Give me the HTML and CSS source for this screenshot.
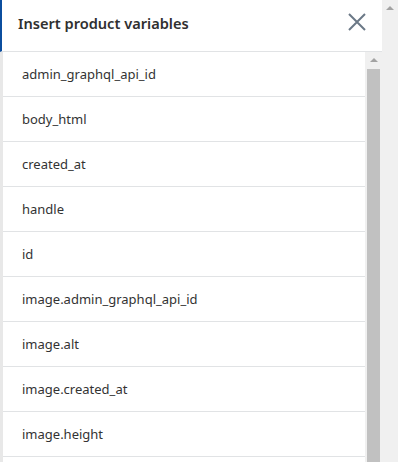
FILE: index.html
```html
<!DOCTYPE html>
<html lang="en">
<head>
    <meta charset="UTF-8">
    <meta name="viewport" content="width=device-width, initial-scale=1.0">
    <title>Insert product variables</title>
    <link rel="stylesheet" href="styles.css">
</head>
<body>
    <div class="page">
        <div class="panel">
            <div class="panel-header">
                <h2>Insert product variables</h2>
                <button class="close" aria-label="Close">
                    <svg width="20" height="20" viewBox="0 0 20 20">
                        <path d="M2 2 L18 18 M18 2 L2 18" stroke="#6b7886" stroke-width="2" fill="none"/>
                    </svg>
                </button>
            </div>
            <div class="panel-body">
                <ul class="var-list">
                    <li>admin_graphql_api_id</li>
                    <li>body_html</li>
                    <li>created_at</li>
                    <li>handle</li>
                    <li>id</li>
                    <li>image.admin_graphql_api_id</li>
                    <li>image.alt</li>
                    <li>image.created_at</li>
                    <li>image.height</li>
                </ul>
                <!-- fake scrollbar of the list -->
                <div class="scrollbar inner">
                    <span class="arrow-up"></span>
                    <span class="thumb"></span>
                </div>
            </div>
        </div>
        <!-- fake scrollbar of the window -->
        <div class="scrollbar outer">
            <span class="arrow-up"></span>
        </div>
    </div>
</body>
</html>
```

FILE: styles.css
```css
body {
    margin: 0;
    padding: 0;
    font-family: 'Noto Sans', 'Open Sans', sans-serif;
    color: #333;
    background: #fff;
    overflow: hidden;
}

.page {
    display: flex;
    width: 398px;
    height: 462px;
}

.panel {
    flex: 1;
    display: flex;
    flex-direction: column;
    min-width: 0;
}

.panel-header {
    height: 51px;
    flex-shrink: 0;
    display: flex;
    align-items: center;
    justify-content: space-between;
    border-left: 2px solid #0b4d9e;
    border-bottom: 1px solid #e1e3e5;
    padding: 0 15px 0 16px;
    box-sizing: content-box;
}

.panel-header h2 {
    margin: 0;
    font-size: 14.6px;
    font-weight: 600;
    color: #303030;
    margin-top: -5px;
}

.close {
    background: none;
    border: none;
    padding: 0;
    width: 20px;
    height: 20px;
    cursor: pointer;
    margin-top: -7px;
}

.panel-body {
    flex: 1;
    display: flex;
    min-height: 0;
    padding-left: 3px;
    background: #e8e8e8;
}

.var-list {
    flex: 1;
    list-style: none;
    margin: 0;
    padding: 0;
    background: #fff;
    overflow: hidden;
}

.var-list li {
    height: 44px;
    line-height: 44px;
    padding-left: 19px;
    font-size: 13px;
    border-bottom: 1px solid #e1e3e5;
}

.scrollbar {
    background: #f0f0f0;
    display: flex;
    flex-direction: column;
    align-items: center;
}

.scrollbar.inner {
    width: 17px;
}

.scrollbar.outer {
    width: 16px;
}

.arrow-up {
    width: 0;
    height: 0;
    border-left: 4px solid transparent;
    border-right: 4px solid transparent;
    border-bottom: 4px solid #a3a3a3;
    margin: 6px 0 7px;
}

.thumb {
    width: 13px;
    flex: 1;
    background: #c1c1c1;
}
```
